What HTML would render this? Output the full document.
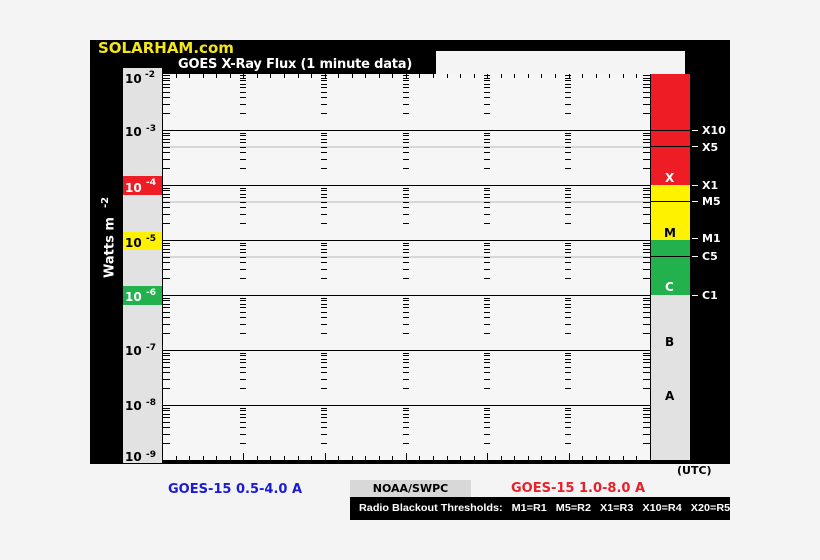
<!DOCTYPE html>
<html><head><meta charset="utf-8"><style>
body{margin:0;width:820px;height:560px;background:#f4f4f4;position:relative;overflow:hidden;font-family:"DejaVu Sans","Liberation Sans",sans-serif;}
.a{position:absolute;}
</style></head><body>
<div class="a" style="left:90px;top:40px;width:640px;height:424px;background:#000"></div>
<div class="a" style="left:98px;top:39px;color:#f5e61c;font-weight:bold;font-size:15px">SOLARHAM.com</div>
<div class="a" style="left:178px;top:57px;color:#fff;font-weight:bold;font-size:13px;letter-spacing:-0.2px">GOES X-Ray Flux (1 minute data)</div>
<div class="a" style="left:436px;top:51px;width:249px;height:23px;background:#f4f4f4"></div>
<div class="a" style="left:100px;top:278px;color:#fff;font-weight:bold;font-size:13px;transform:rotate(-90deg);transform-origin:0 0;white-space:nowrap">Watts m &nbsp;<sup style="font-size:10px">-2</sup></div>
<svg class="a" style="left:0;top:0" width="820" height="560" id="s">
<rect x="123" y="68" width="39" height="395" fill="#e2e2e2"/>
<rect x="162" y="74" width="488" height="386" fill="#f6f6f6"/>
<rect x="650" y="74" width="40" height="111" fill="#ee1c24"/>
<rect x="650" y="185" width="40" height="55" fill="#fff200"/>
<rect x="650" y="240" width="40" height="55" fill="#22b14c"/>
<rect x="650" y="295" width="40" height="165" fill="#e2e2e2"/>
<rect x="123" y="176" width="39" height="19" fill="#ee1c24"/>
<rect x="123" y="232" width="39" height="18" fill="#fff200"/>
<rect x="123" y="286" width="39" height="19" fill="#22b14c"/>
<rect x="162" y="460" width="488" height="3" fill="#000"/>
<g id="g"></g>
<g font-family="DejaVu Sans,Liberation Sans,sans-serif" font-weight="bold" font-size="12">
<text x="125" y="83" fill="#000">10</text><text x="145" y="77" font-size="9">-2</text>
<text x="125" y="136">10</text><text x="146" y="131" font-size="9">-3</text>
<text x="125" y="192" fill="#fff">10</text><text x="146" y="185" font-size="9" fill="#fff">-4</text>
<text x="125" y="247">10</text><text x="146" y="241" font-size="9">-5</text>
<text x="125" y="301" fill="#fff">10</text><text x="146" y="295" font-size="9" fill="#fff">-6</text>
<text x="125" y="355">10</text><text x="146" y="350" font-size="9">-7</text>
<text x="125" y="410">10</text><text x="146" y="405" font-size="9">-8</text>
<text x="125" y="461">10</text><text x="146" y="457" font-size="9">-9</text>
<text x="665" y="182" fill="#fff">X</text>
<text x="664" y="237">M</text>
<text x="665" y="291" fill="#fff">C</text>
<text x="665" y="346">B</text>
<text x="665" y="400">A</text>
<g fill="#fff" font-size="11"><text x="702" y="134">X10</text><text x="702" y="151">X5</text><text x="702" y="189">X1</text><text x="702" y="205">M5</text><text x="702" y="242">M1</text><text x="702" y="260">C5</text><text x="702" y="299">C1</text></g>
</g>
</svg>
<div class="a" style="left:677px;top:464px;font-weight:bold;font-size:11px">(UTC)</div>
<div class="a" style="left:168px;top:482px;font-weight:bold;font-size:13px;color:#1a1ad8">GOES-15 0.5-4.0 A</div>
<div class="a" style="left:350px;top:480px;width:121px;height:17px;background:#d8d8d8;font-weight:bold;font-size:11px;text-align:center;line-height:17px">NOAA/SWPC</div>
<div class="a" style="left:511px;top:481px;font-weight:bold;font-size:13px;color:#e8202a">GOES-15 1.0-8.0 A</div>
<div class="a" style="left:350px;top:497px;width:380px;height:23px;background:#000;overflow:hidden"><div style="position:absolute;left:9px;top:0;color:#fff;font-family:'Liberation Sans',sans-serif;font-weight:bold;font-size:10.5px;line-height:23px;white-space:nowrap;transform:scaleX(1.03);transform-origin:0 0">Radio Blackout Thresholds: &nbsp;&nbsp;M1=R1 &nbsp;&nbsp;M5=R2 &nbsp;&nbsp;X1=R3 &nbsp;&nbsp;X10=R4 &nbsp;&nbsp;X20=R5</div></div>
<script>
var g=document.getElementById('g'),h='';
function L(x1,y1,x2,y2,c,w){h+='<line x1="'+x1+'" y1="'+y1+'" x2="'+x2+'" y2="'+y2+'" stroke="'+c+'" stroke-width="'+(w||1)+'"/>';}
[146.5,201.5,256.5].forEach(function(y){L(162,y+0.5,650,y+0.5,'#bbb');});
for(var d=1;d<8;d++){var y=75+d*55;L(162,y+0.5,650,y+0.5,'#000');}
L(650,130.5,690,130.5,'#000');L(650,146.5,690,146.5,'#000');L(650,201.5,690,201.5,'#000');L(650,256.5,690,256.5,'#000');
L(650.5,74,650.5,460,'#000');L(162.5,74,162.5,460,'#000');
[130,146,185,201,238,256,295].forEach(function(y){L(692,y+0.5,698,y+0.5,'#fff');});
var xs=[162,243,324,406,487,568,650];
xs.forEach(function(x,i){
 for(var d=0;d<7;d++){var y0=75+d*55;
  for(var k=2;k<=10;k++){var y=Math.round(y0+55*(1-Math.log10(k)))+0.5;
   if(i==0)L(163,y,170,y,'#000');else if(i==6)L(643,y,650,y,'#000');else L(x-3,y,x+3,y,'#000');}
 }
});
for(var i=0;i<6;i++){for(var j=1;j<6;j++){var x=Math.round(162+i*81.3+j*13.55)+0.5;L(x,456,x,460,'#000');}
 var x=Math.round(162+(i+1)*81.3)+0.5;L(x,453,x,460,'#000');}
for(var x=162;x<650;x+=13.55){L(Math.round(x)+0.5,74,Math.round(x)+0.5,78,'#000');}
g.innerHTML=h;
</script>
</body></html>
